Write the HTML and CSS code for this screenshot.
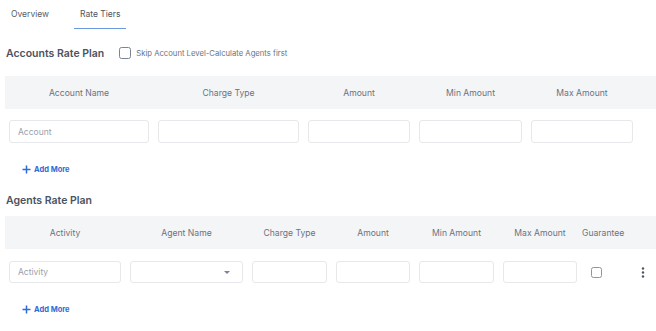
FILE: index.html
```html
<!DOCTYPE html>
<html>
<head>
<meta charset="utf-8">
<link rel="stylesheet" href="styles.css">
</head>
<body>
<div class="tabs">
  <div class="tab">Overview</div>
  <div class="tab active">Rate Tiers</div>
</div>

<div class="title-row">
  <h2 class="title">Accounts Rate Plan</h2>
  <label class="skip"><span class="box"></span>Skip Account Level-Calculate Agents first</label>
</div>

<div class="grid g1 head">
  <div class="cell">Account Name</div>
  <div class="cell">Charge Type</div>
  <div class="cell">Amount</div>
  <div class="cell">Min Amount</div>
  <div class="cell">Max Amount</div>
  <div class="cell"></div>
</div>
<div class="grid g1 row">
  <div class="cell"><div class="input ph">Account</div></div>
  <div class="cell"><div class="input"></div></div>
  <div class="cell"><div class="input"></div></div>
  <div class="cell"><div class="input"></div></div>
  <div class="cell"><div class="input"></div></div>
  <div class="cell"></div>
</div>
<div class="add"><svg class="plus" width="9" height="9" viewBox="0 0 9 9"><path d="M4.5 0.5V8.5M0.5 4.5H8.5" stroke="#2f6bd6" stroke-width="1.5"/></svg>Add More</div>

<h2 class="title t2">Agents Rate Plan</h2>

<div class="grid g2 head">
  <div class="cell">Activity</div>
  <div class="cell">Agent Name</div>
  <div class="cell">Charge Type</div>
  <div class="cell">Amount</div>
  <div class="cell">Min Amount</div>
  <div class="cell">Max Amount</div>
  <div class="cell guar">Guarantee</div>
  <div class="cell"></div>
</div>
<div class="grid g2 row r2">
  <div class="cell"><div class="input ph">Activity</div></div>
  <div class="cell"><div class="input select"><span class="caret"></span></div></div>
  <div class="cell"><div class="input"></div></div>
  <div class="cell"><div class="input"></div></div>
  <div class="cell"><div class="input"></div></div>
  <div class="cell"><div class="input"></div></div>
  <div class="cell chk"><span class="box"></span></div>
  <div class="cell kebab"><svg width="4" height="11" viewBox="0 0 4 11"><circle cx="2" cy="1.5" r="1.2" fill="#4b5563"/><circle cx="2" cy="5.5" r="1.2" fill="#4b5563"/><circle cx="2" cy="9.5" r="1.2" fill="#4b5563"/></svg></div>
</div>
<div class="add a2"><svg class="plus" width="9" height="9" viewBox="0 0 9 9"><path d="M4.5 0.5V8.5M0.5 4.5H8.5" stroke="#2f6bd6" stroke-width="1.5"/></svg>Add More</div>
</body>
</html>
```
FILE: styles.css
```css
* { box-sizing: border-box; }
body {
  margin: 0;
  font-family: Inter, "Liberation Sans", sans-serif;
  color: #4b5563;
  background: #fff;
}
.tabs {
  display: flex;
  gap: 19px;
  padding-left: 5px;
  height: 29px;
}
.tab {
  padding: 9px 6px 0;
  font-size: 8.5px;
  color: #555d68;
  height: 29px;
}
.tab.active {
  border-bottom: 1.5px solid #6d9ae0;
  color: #4b5563;
}
.title-row {
  display: flex;
  align-items: center;
  height: 47px;
  padding: 1px 0 0 6px;
}
.title {
  margin: 0;
  font-size: 10.5px;
  font-weight: 600;
  color: #4a5361;
}
.skip {
  display: flex;
  align-items: center;
  margin-left: 15px;
  font-size: 7.7px;
  color: #6b7280;
}
.skip .box { margin-right: 5px; }
.box {
  display: inline-block;
  width: 12px;
  height: 12px;
  border: 1.5px solid #7b8494;
  border-radius: 2.5px;
}
.grid {
  display: grid;
  margin-left: 5px;
}
.g1 { grid-template-columns: 149px 150px 111px 112px 111px 1fr; }
.g2 { grid-template-columns: 121px 122px 84px 83px 84px 83px 48px 1fr; }
.head {
  background: #f4f5f7;
  height: 33px;
  align-items: center;
  font-size: 8.6px;
  color: #6b7280;
}
.head .cell { text-align: center; padding: 0 5px 0 4px; }
.head .guar { padding: 0 6px 0 0; }
.row { padding-top: 12px; }
.g1.row { padding-top: 11px; }
.row .cell { padding: 0 5px 0 4px; }
.input {
  height: 23px;
  border: 1px solid #e6e8eb;
  border-radius: 3px;
  background: #fff;
  font-size: 8.5px;
  padding: 0 8px;
  display: flex;
  align-items: center;
}
.r2 .input { height: 22px; }
.ph { color: #9aa1ab; }
.select { justify-content: flex-end; }
.caret {
  width: 0; height: 0;
  border-left: 3px solid transparent;
  border-right: 3px solid transparent;
  border-top: 3px solid #7b8494;
  margin-right: 4px;
}
.chk { display: flex; align-items: center; padding-left: 9px !important; }
.chk .box { width: 11px; height: 11px; border-color: #8d95a3; }
.kebab { display: flex; align-items: center; justify-content: center; }
.add {
  display: flex;
  align-items: center;
  margin: 20px 0 0 22px;
  font-size: 7.5px;
  font-weight: 700;
  color: #2f6bd6;
  height: 12px;
}
.plus { margin-right: 3px; }
.t2 { margin: 19px 0 0 6px; height: 14px; }
.g2.head { margin-top: 8px; }
.a2 { margin-top: 20px; }
```
